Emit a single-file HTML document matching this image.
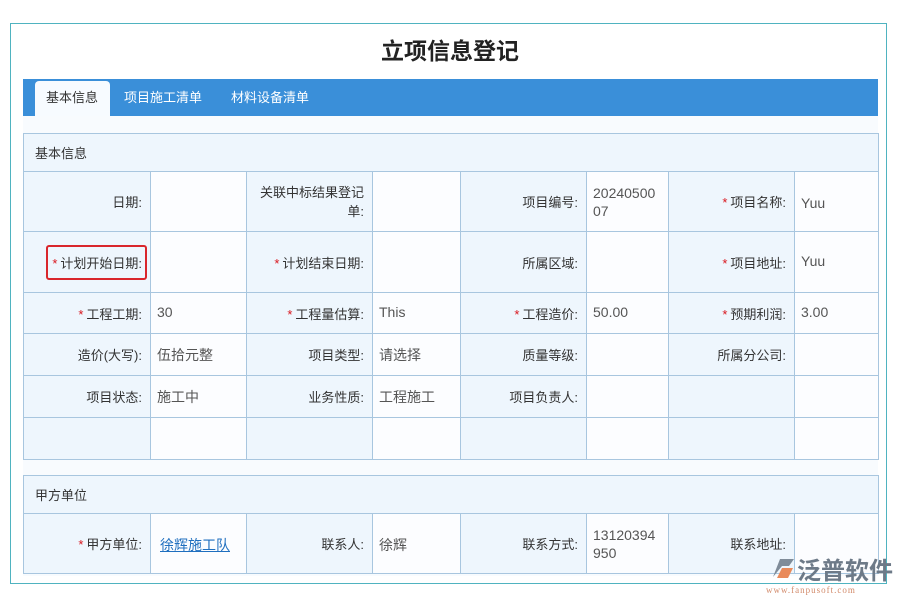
<!DOCTYPE html>
<html><head><meta charset="utf-8"><style>
*{margin:0;padding:0;box-sizing:border-box}
body{width:900px;height:600px;background:#fff;font-family:"Liberation Sans","Noto Sans CJK SC",sans-serif;font-size:13px;color:#333;position:relative;overflow:hidden}
.outer{position:absolute;left:10px;top:23px;width:877px;height:561px;border:1px solid #4fb3c0}
.title{position:absolute;left:0;top:32px;width:900px;text-align:center;font-size:23px;font-weight:bold;color:#222}
.tabbar{position:absolute;left:23px;top:79px;width:855px;height:37px;background:#3a8fd9}
.tab{position:absolute;top:0;height:37px;line-height:38px;color:#fff;font-size:13px}
.tab.act{background:#f7fbff;color:#333;border-radius:4px 4px 0 0;top:2px;height:35px;line-height:34px;padding:0 11px;width:75px}
.bg{position:absolute;left:23px;top:116px;width:855px;height:460px;background:#f8fbfe}
table{position:absolute;left:23px;border-collapse:collapse;table-layout:fixed}
td{border:1px solid #a8c6df;font-size:13px;vertical-align:middle}
td.l{background:#eef6fd;text-align:right;padding-right:8px}
td.v{background:#fcfdff;padding-left:6px;vertical-align:top;padding-top:10px;line-height:18px;color:#555;font-size:14px}
td.h{background:#eef6fd;padding-left:11px;height:38px}
.s{color:#d9141c;margin-right:3px}
a{color:#1f6fbf;text-decoration:underline}
.logo{position:absolute;left:770px;top:551px;width:130px}
</style></head><body>
<div class="outer"></div>
<div class="title">立项信息登记</div>
<div class="tabbar">
<div class="tab act" style="left:12px">基本信息</div>
<div class="tab" style="left:101px">项目施工清单</div>
<div class="tab" style="left:208px">材料设备清单</div>
</div>
<div class="bg"></div>
<table style="top:133px;width:855px">
<colgroup><col style="width:127px"><col style="width:96px"><col style="width:126px"><col style="width:88px"><col style="width:126px"><col style="width:82px"><col style="width:126px"><col style="width:84px"></colgroup>
<tr><td class="h" colspan="8">基本信息</td></tr>
<tr style="height:60px"><td class="l">日期:</td><td class="v"></td><td class="l" style="line-height:19px">关联中标结果登记<br>单:</td><td class="v"></td><td class="l">项目编号:</td><td class="v" style="padding-top:12px">20240500<br>07</td><td class="l"><span class="s">*</span>项目名称:</td><td class="v" style="padding-top:22px">Yuu</td></tr>
<tr style="height:61px"><td class="l"><span style="display:inline-block;border:2px solid #d9262c;border-radius:3px;padding:6px 3px 6px 4px;margin-right:-5px"><span class="s">*</span>计划开始日期:</span></td><td class="v"></td><td class="l"><span class="s">*</span>计划结束日期:</td><td class="v"></td><td class="l">所属区域:</td><td class="v"></td><td class="l"><span class="s">*</span>项目地址:</td><td class="v" style="padding-top:20px">Yuu</td></tr>
<tr style="height:41px"><td class="l"><span class="s">*</span>工程工期:</td><td class="v">30</td><td class="l"><span class="s">*</span>工程量估算:</td><td class="v">This</td><td class="l"><span class="s">*</span>工程造价:</td><td class="v">50.00</td><td class="l"><span class="s">*</span>预期利润:</td><td class="v">3.00</td></tr>
<tr style="height:42px"><td class="l">造价(大写):</td><td class="v" style="padding-top:12px">伍拾元整</td><td class="l">项目类型:</td><td class="v" style="padding-top:12px">请选择</td><td class="l">质量等级:</td><td class="v"></td><td class="l">所属分公司:</td><td class="v"></td></tr>
<tr style="height:42px"><td class="l">项目状态:</td><td class="v" style="padding-top:12px">施工中</td><td class="l">业务性质:</td><td class="v" style="padding-top:12px">工程施工</td><td class="l">项目负责人:</td><td class="v"></td><td class="l"></td><td class="v"></td></tr>
<tr style="height:42px"><td class="l"></td><td class="v"></td><td class="l"></td><td class="v"></td><td class="l"></td><td class="v"></td><td class="l"></td><td class="v"></td></tr>
</table>
<table style="top:475px;width:855px">
<colgroup><col style="width:127px"><col style="width:96px"><col style="width:126px"><col style="width:88px"><col style="width:126px"><col style="width:82px"><col style="width:126px"><col style="width:84px"></colgroup>
<tr><td class="h" colspan="8">甲方单位</td></tr>
<tr style="height:60px"><td class="l"><span class="s">*</span>甲方单位:</td><td class="v" style="padding-top:22px;padding-left:9px"><a>徐辉施工队</a></td><td class="l">联系人:</td><td class="v" style="padding-top:22px">徐辉</td><td class="l">联系方式:</td><td class="v" style="padding-top:12px">13120394<br>950</td><td class="l">联系地址:</td><td class="v"></td></tr>
</table>
<div class="logo">
<svg width="26" height="26" style="position:absolute;left:0;top:4px"><path d="M3 22 L10 4 L24 4 L19 11 L12 11 Z" fill="#7f8c99"/><path d="M12 13 L23 13 L18 23 L7 23 Z" fill="#e98a5a"/></svg>
<span style="position:absolute;left:27px;top:0;font-size:24px;color:#6d7a88;font-weight:bold;letter-spacing:0">泛普软件</span>
<span style="position:absolute;left:-4px;top:34px;font-size:9px;color:#d28a6a;font-family:'Liberation Serif',serif;letter-spacing:1px">www.fanpusoft.com</span>
</div>
</body></html>
